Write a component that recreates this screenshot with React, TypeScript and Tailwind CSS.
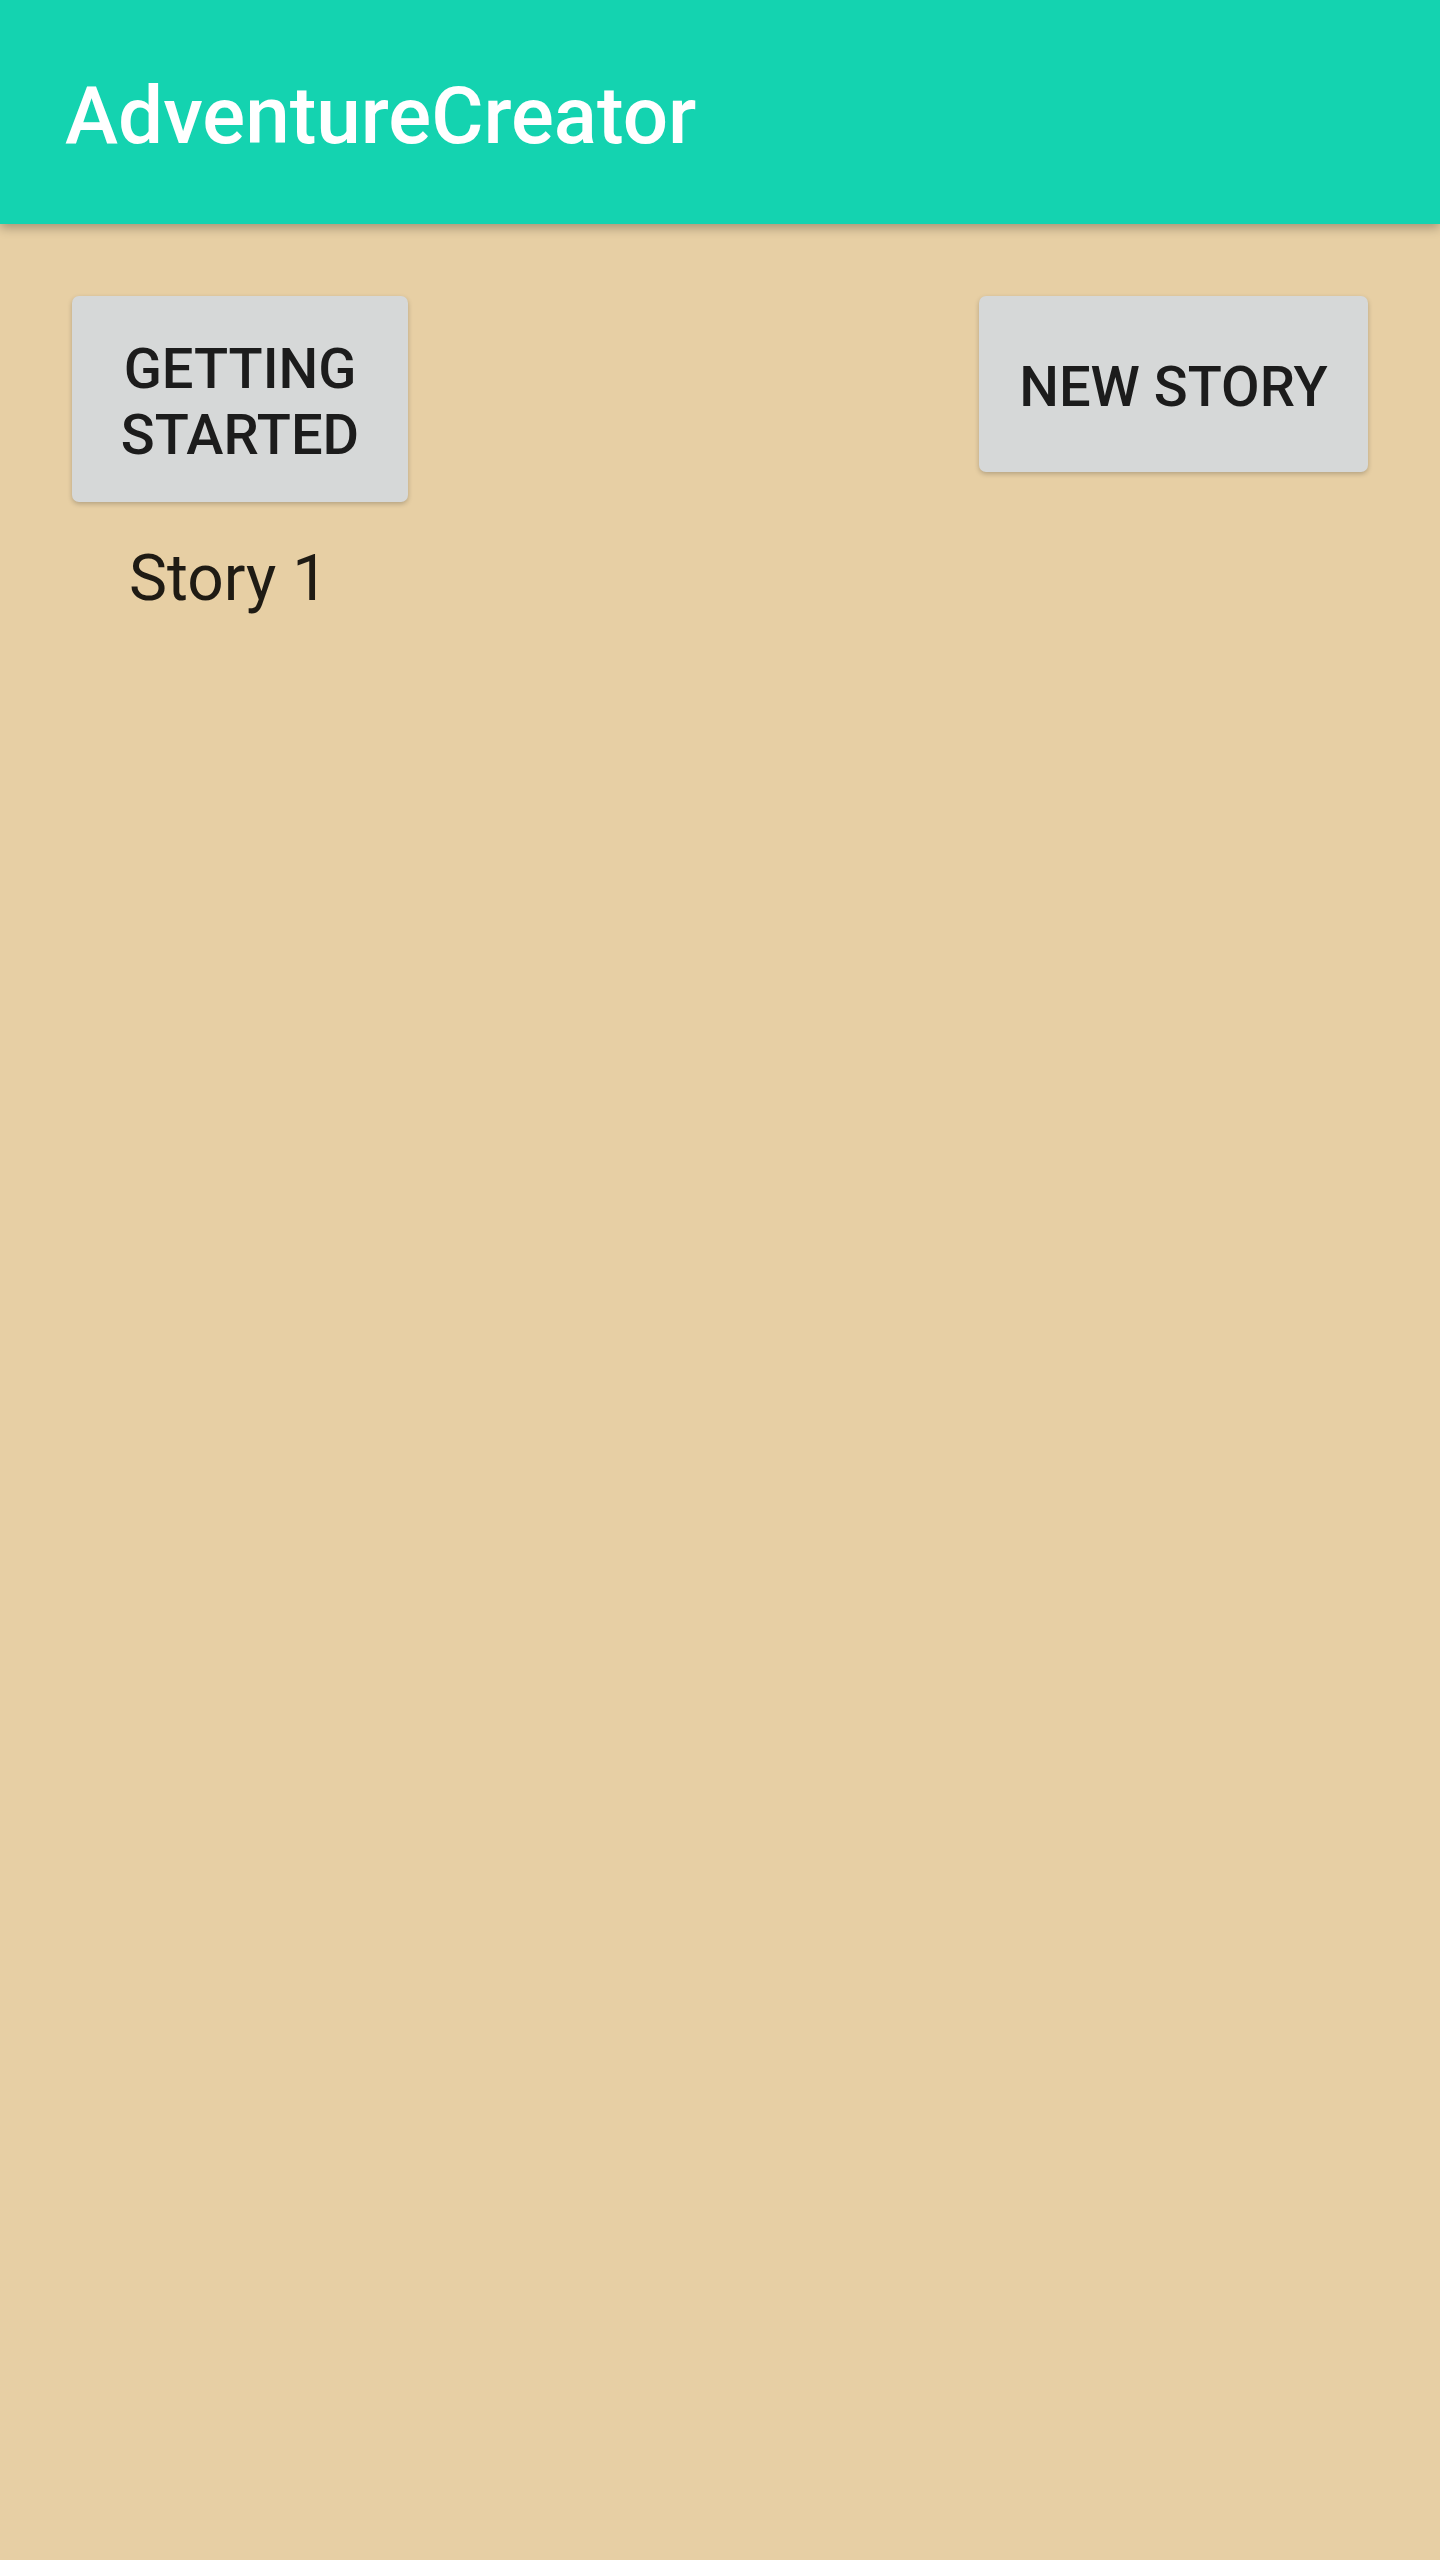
import React from "react";

export default function App() {
  return (
    <div
      className="w-full min-h-screen bg-[#e7cfa4]"
      style={{ fontFamily: "Roboto, 'Noto Sans', sans-serif" }}
    >
      <header className="relative z-10 h-[224px] bg-[#14d3b0] flex items-center pt-2 pl-[65px] shadow-[0_4px_10px_rgba(0,0,0,0.28)]">
        <h1 className="text-[80px] leading-[94px] font-medium text-white">AdventureCreator</h1>
      </header>
      <main className="px-[72px] pt-[72px]">
        <div className="flex justify-between items-start">
          <div className="flex flex-col items-start">
            <button className="w-[336px] h-[206px] pt-[40px] pb-[34px] bg-[#d6d8d8] rounded-[7px] shadow-[0_2px_5px_rgba(0,0,0,0.22)] text-[56px] leading-[66px] font-medium uppercase text-[#1c1c1c] text-center">
              Getting
              <br />
              Started
            </button>
            <p className="mt-[39px] pl-[57px] text-[64px] leading-[75px] text-[#1f1b14]">Story 1</p>
          </div>
          <button className="w-[389px] h-[176px] pt-[58px] pb-[52px] bg-[#d6d8d8] rounded-[7px] shadow-[0_2px_5px_rgba(0,0,0,0.22)] text-[56px] leading-[66px] font-medium uppercase text-[#1c1c1c] text-center">
            New Story
          </button>
        </div>
      </main>
    </div>
  );
}
